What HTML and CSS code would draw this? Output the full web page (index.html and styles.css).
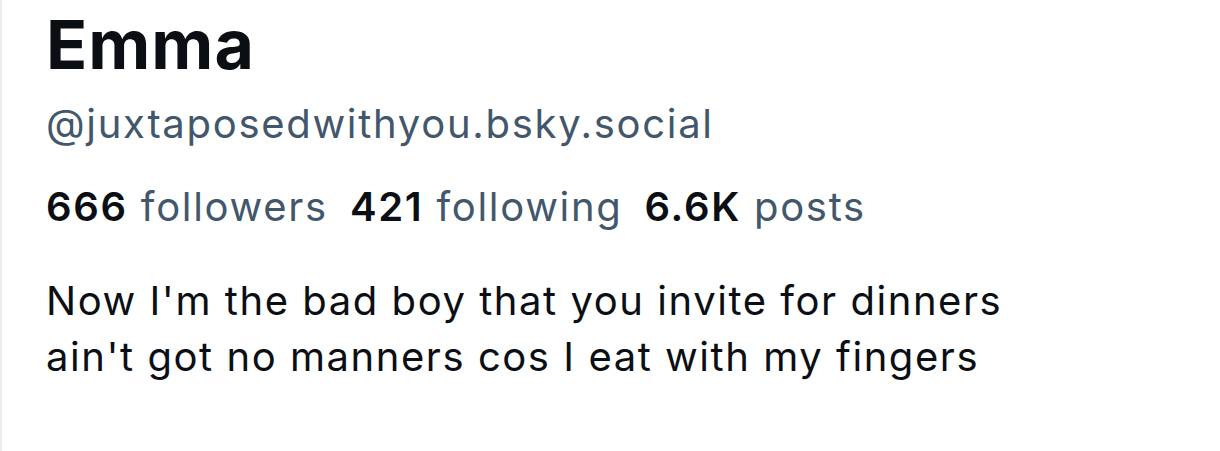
FILE: index.html
```html
<!DOCTYPE html>
<html lang="en">
  <head>
    <meta charset="UTF-8" />
    <meta name="viewport" content="width=device-width, initial-scale=1.0" />
    <title>Emma</title>
    <link rel="stylesheet" href="styles.css">
  </head>
  <body>
    <div class="profile">
      <h1 class="name">Emma</h1>
      <div class="handle">@juxtaposedwithyou.bsky.social</div>
      <div class="stats">
        <span class="stat"><b>666</b> followers</span>
        <span class="stat"><b>421</b> following</span>
        <span class="stat"><b>6.6K</b> posts</span>
      </div>
      <p class="bio">Now I'm the bad boy that you invite for dinners<br>ain't got no manners cos I eat with my fingers</p>
    </div>
  </body>
</html>
```

FILE: styles.css
```css
body {
  margin: 0;
  background-color: #ffffff;
  font-family: "Inter", "Roboto", sans-serif;
  color: #0b0f14;
}

.profile {
  min-height: 451px;
  box-sizing: border-box;
  border-left: 2px solid #e8ecef;
  padding: 6px 0 0 44px;
}

.name {
  margin: 0;
  font-size: 68px;
  line-height: 76px;
  font-weight: 700;
  letter-spacing: 1px;
}

.handle {
  margin-top: 14px;
  font-size: 40px;
  line-height: 56px;
  letter-spacing: 1.7px;
  color: #42576c;
}

.stats {
  display: flex;
  gap: 22px;
  margin-top: 30px;
  font-size: 40px;
  line-height: 50px;
  letter-spacing: 1.7px;
  color: #42576c;
}

.stat b {
  font-weight: 600;
  color: #0b0f14;
}

.bio {
  margin: 41px 0 0;
  font-size: 40px;
  line-height: 56px;
  letter-spacing: 1.55px;
}
```
